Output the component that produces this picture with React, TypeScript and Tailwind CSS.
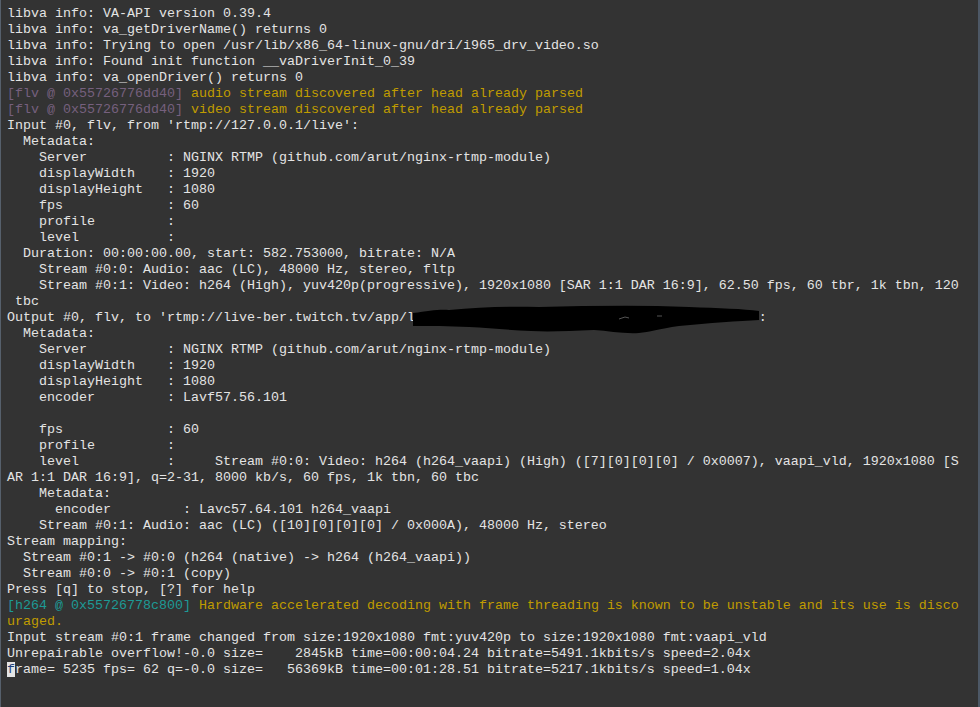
import React from 'react';

type Seg = { t: string; c?: string };
type Line = Seg[];

const W = 'text-[#e4e4e4]';
const PURPLE = 'text-[#76607e]';
const GOLD = 'text-[#c09c00]';
const TEAL = 'text-[#1d9a96]';

const plain = (t: string): Line => [{ t }];

const lines: Line[] = [
  plain('libva info: VA-API version 0.39.4'),
  plain('libva info: va_getDriverName() returns 0'),
  plain('libva info: Trying to open /usr/lib/x86_64-linux-gnu/dri/i965_drv_video.so'),
  plain('libva info: Found init function __vaDriverInit_0_39'),
  plain('libva info: va_openDriver() returns 0'),
  [
    { t: '[flv @ 0x55726776dd40] ', c: PURPLE },
    { t: 'audio stream discovered after head already parsed', c: GOLD },
  ],
  [
    { t: '[flv @ 0x55726776dd40] ', c: PURPLE },
    { t: 'video stream discovered after head already parsed', c: GOLD },
  ],
  plain("Input #0, flv, from 'rtmp://127.0.0.1/live':"),
  plain('  Metadata:'),
  plain('    Server          : NGINX RTMP (github.com/arut/nginx-rtmp-module)'),
  plain('    displayWidth    : 1920'),
  plain('    displayHeight   : 1080'),
  plain('    fps             : 60'),
  plain('    profile         :'),
  plain('    level           :'),
  plain('  Duration: 00:00:00.00, start: 582.753000, bitrate: N/A'),
  plain('    Stream #0:0: Audio: aac (LC), 48000 Hz, stereo, fltp'),
  plain(
    '    Stream #0:1: Video: h264 (High), yuv420p(progressive), 1920x1080 [SAR 1:1 DAR 16:9], 62.50 fps, 60 tbr, 1k tbn, 120'
  ),
  plain(' tbc'),
  plain("Output #0, flv, to 'rtmp://live-ber.twitch.tv/app/l                                          ':"),
  plain('  Metadata:'),
  plain('    Server          : NGINX RTMP (github.com/arut/nginx-rtmp-module)'),
  plain('    displayWidth    : 1920'),
  plain('    displayHeight   : 1080'),
  plain('    encoder         : Lavf57.56.101'),
  plain(''),
  plain('    fps             : 60'),
  plain('    profile         :'),
  plain(
    '    level           :     Stream #0:0: Video: h264 (h264_vaapi) (High) ([7][0][0][0] / 0x0007), vaapi_vld, 1920x1080 [S'
  ),
  plain('AR 1:1 DAR 16:9], q=2-31, 8000 kb/s, 60 fps, 1k tbn, 60 tbc'),
  plain('    Metadata:'),
  plain('      encoder         : Lavc57.64.101 h264_vaapi'),
  plain('    Stream #0:1: Audio: aac (LC) ([10][0][0][0] / 0x000A), 48000 Hz, stereo'),
  plain('Stream mapping:'),
  plain('  Stream #0:1 -> #0:0 (h264 (native) -> h264 (h264_vaapi))'),
  plain('  Stream #0:0 -> #0:1 (copy)'),
  plain('Press [q] to stop, [?] for help'),
  [
    { t: '[h264 @ 0x55726778c800] ', c: TEAL },
    {
      t: 'Hardware accelerated decoding with frame threading is known to be unstable and its use is disco',
      c: GOLD,
    },
  ],
  [{ t: 'uraged.', c: GOLD }],
  plain('Input stream #0:1 frame changed from size:1920x1080 fmt:yuv420p to size:1920x1080 fmt:vaapi_vld'),
  plain('Unrepairable overflow!-0.0 size=    2845kB time=00:00:04.24 bitrate=5491.1kbits/s speed=2.04x'),
];

// the stream key got scribbled out in the original shot
function Redaction() {
  return (
    <svg
      className="absolute left-[408px] top-[303px]"
      width="356"
      height="34"
      viewBox="0 0 356 34"
    >
      <path
        d="M4 10 C 20 8, 30 6, 40 7 C 70 4, 100 3, 130 4 C 180 3, 230 2, 280 4 C 310 5, 335 6, 350 8 L 350 17 C 330 18, 300 20, 270 23 C 250 26, 240 29, 230 30 C 215 31, 200 28, 185 27 C 160 28, 140 29, 122 28 C 100 27, 80 25, 60 24 C 40 23, 20 23, 4 23 Z"
        fill="#000"
      />
      <path d="M210 16 l6 -2 l4 1" stroke="#555" strokeWidth="1" fill="none" />
      <path d="M248 13 l5 0" stroke="#555" strokeWidth="1" fill="none" />
    </svg>
  );
}

export default function App() {
  return (
    <div className="relative w-[980px] h-[707px] overflow-hidden bg-[#333333] border-l border-[#56606c] border-r-2 border-r-[#4d5866]">
      <pre
        className={`pl-[6px] pt-[6px] font-['Liberation_Mono','Courier_New',monospace] text-[13.333px] leading-[16px] whitespace-pre ${W}`}
      >
        {lines.map((l, i) => (
          <div key={i} className="h-[16px]">
            {l.map((s, j) => (
              <span key={j} className={s.c}>
                {s.t}
              </span>
            ))}
          </div>
        ))}
        <div className="h-[16px]">
          <span className="bg-[#e4e4e4] text-[#1c3f7a]">f</span>
          <span>rame= 5235 fps= 62 q=-0.0 size=   56369kB time=00:01:28.51 bitrate=5217.1kbits/s speed=1.04x</span>
        </div>
      </pre>
      <Redaction />
    </div>
  );
}
